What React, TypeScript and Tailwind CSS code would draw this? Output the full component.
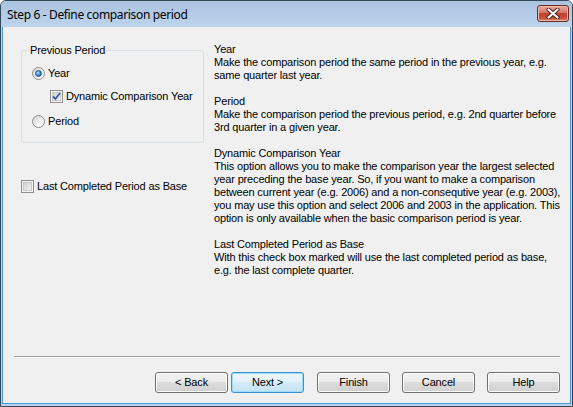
import React from "react";

const help = [
  {
    title: "Year",
    lines: [
      "Make the comparison period the same period in the previous year, e.g.",
      "same quarter last year.",
    ],
  },
  {
    title: "Period",
    lines: [
      "Make the comparison period the previous period, e.g. 2nd quarter before",
      "3rd quarter in a given year.",
    ],
  },
  {
    title: "Dynamic Comparison Year",
    lines: [
      "This option allows you to make the comparison year the largest selected",
      "year preceding the base year. So, if you want to make a comparison",
      "between current year (e.g. 2006) and a non-consequtive year (e.g. 2003),",
      "you may use this option and select 2006 and 2003 in the application. This",
      "option is only available when the basic comparison period is year.",
    ],
  },
  {
    title: "Last Completed Period as Base",
    lines: [
      "With this check box marked will use the last completed period as base,",
      "e.g. the last complete quarter.",
    ],
  },
];

const Radio = ({ checked }: { checked?: boolean }) => (
  <span className="flex h-[13px] w-[13px] shrink-0 items-center justify-center rounded-full border border-[#8b8b8b] bg-[linear-gradient(135deg,#d4d4d4,#f7f7f7_70%,#ffffff)]">
    {checked && (
      <span className="h-[7px] w-[7px] rounded-full border border-[#1a4f83] bg-[radial-gradient(circle_at_35%_35%,#a8e4ff,#3c8fd0_55%,#1b4f86)]" />
    )}
  </span>
);

const Checkbox = ({ checked }: { checked?: boolean }) => (
  <span className="flex h-[13px] w-[13px] shrink-0 items-center justify-center border border-[#8e8f8f] bg-[#f4f4f4]">
    <span className="flex h-[9px] w-[9px] items-center justify-center border border-[#c8c8c8] bg-[linear-gradient(135deg,#cfcfcf,#f2f2f2)]">
      {checked && (
        <svg width="9" height="9" viewBox="0 0 9 9" className="overflow-visible">
          <path d="M1 4.5 L3.5 7 L8 1" fill="none" stroke="#3d5aa0" strokeWidth="1.8" />
        </svg>
      )}
    </span>
  </span>
);

const Button = ({ label, focused }: { label: string; focused?: boolean }) => (
  <button
    className={
      focused
        ? "flex h-[21px] w-[73px] items-center justify-center rounded-[3px] border border-[#3c8fd0] bg-[linear-gradient(#eaf6fd,#e3f2fb_50%,#d4ebf8_50%,#c4e2f4)] text-black shadow-[inset_0_0_0_1px_#9fdcf8]"
        : "flex h-[21px] w-[73px] items-center justify-center rounded-[3px] border border-[#707070] bg-[linear-gradient(#f2f2f2,#ebebeb_50%,#dddddd_50%,#cfcfcf)] text-black shadow-[inset_0_0_0_1px_#fcfcfc]"
    }
  >
    {label}
  </button>
);

export default function App() {
  return (
    <div className="flex h-[407px] w-[573px] flex-col rounded-t-[6px] border border-[#34465a] bg-[#b9d1ea] font-['Liberation_Sans',Arial,sans-serif] text-[11px] leading-[13px] tracking-[-0.16px] text-black">
      <div className="flex h-[26px] shrink-0 items-start rounded-t-[5px] bg-[linear-gradient(#a9c2df,#bdd4ec)]">
        <span className="mt-[6px] ml-[6px] font-['Noto_Sans',sans-serif] text-[12px] leading-[16px] tracking-[-0.35px]">
          Step 6 - Define comparison period
        </span>
        <div className="mt-[4px] mr-[3px] ml-auto flex h-[17px] w-[32px] items-center justify-center rounded-[3px] border border-[#6e2a22] bg-[linear-gradient(#e9a99b,#d5776a_45%,#c0402f_50%,#c94f38_80%,#d88a6e)] shadow-[inset_0_0_0_1px_#f0b8a8]">
          <svg width="14" height="11" viewBox="0 0 14 11">
            <path d="M2.5 1.5 L11.5 9.5 M11.5 1.5 L2.5 9.5" stroke="#4a1b16" strokeWidth="4" strokeLinecap="round" />
            <path d="M2.5 1.5 L11.5 9.5 M11.5 1.5 L2.5 9.5" stroke="#ffffff" strokeWidth="2.2" strokeLinecap="round" />
          </svg>
        </div>
      </div>

      <div className="mx-[1px] mb-[2px] flex flex-1 flex-col border border-t-0 border-[#4b9ad6] bg-[#f0f0f0]">
        <div className="flex flex-1">
          <div className="ml-[18px] flex w-[182px] flex-col">
            <fieldset className="mt-[17px] h-[99px] rounded-[3px] border border-[#d5dfe5] p-0">
              <legend className="ml-[7px] px-[1px]">Previous Period</legend>
              <div className="px-[10px] pt-[10px] whitespace-nowrap">
                <label className="flex items-center gap-[3px]">
                  <Radio checked />
                  <span>Year</span>
                </label>
                <label className="mt-[10px] ml-[18px] flex items-center gap-[3px]">
                  <Checkbox checked />
                  <span>Dynamic Comparison Year</span>
                </label>
                <label className="mt-[12px] flex items-center gap-[3px]">
                  <Radio />
                  <span>Period</span>
                </label>
              </div>
            </fieldset>
            <label className="mt-[37px] flex items-center gap-[3px] whitespace-nowrap">
              <Checkbox />
              <span>Last Completed Period as Base</span>
            </label>
          </div>

          <div className="ml-[11px] flex flex-col gap-[13px] pt-[16px]">
            {help.map((h) => (
              <div key={h.title} className="whitespace-nowrap">
                <div>{h.title}</div>
                {h.lines.map((l) => (
                  <div key={l}>{l}</div>
                ))}
              </div>
            ))}
          </div>
        </div>

        <div className="mr-[10px] ml-[11px] border-t border-b border-t-[#a0a0a0] border-b-white" />

        <div className="mr-[10px] mt-[14px] mb-[10px] flex justify-end">
          <Button label="< Back" />
          <div className="ml-[3px]">
            <Button label="Next >" focused />
          </div>
          <div className="ml-[13px]">
            <Button label="Finish" />
          </div>
          <div className="ml-[12px]">
            <Button label="Cancel" />
          </div>
          <div className="ml-[12px]">
            <Button label="Help" />
          </div>
        </div>
      </div>
    </div>
  );
}
